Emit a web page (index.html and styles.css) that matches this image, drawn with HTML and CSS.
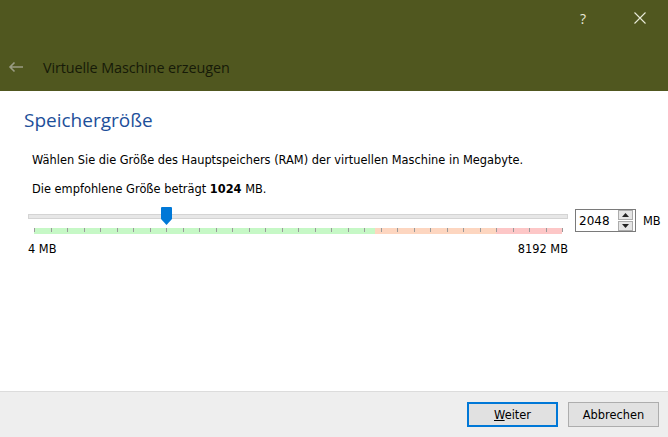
FILE: index.html
```html
<!DOCTYPE html>
<html lang="de">
<head>
<meta charset="utf-8">
<link rel="stylesheet" href="styles.css">
</head>
<body>
<div class="window">
  <header class="header">
    <div class="caption">
      <span class="cap-btn help">?</span>
      <span class="cap-btn close">
        <svg width="12" height="12" viewBox="0 0 12 12"><path d="M0.5 0.5 L11.5 11.5 M11.5 0.5 L0.5 11.5" stroke="#e8ead8" stroke-width="1.1" fill="none"/></svg>
      </span>
    </div>
    <div class="title-row">
      <svg class="back" width="16" height="12" viewBox="0 0 16 12"><path d="M15 6 H2 M6.5 1.5 L2 6 L6.5 10.5" stroke="#9a9c84" stroke-width="1.6" fill="none"/></svg>
      <span class="title">Virtuelle Maschine erzeugen</span>
    </div>
  </header>
  <main class="content">
    <h1 class="heading">Speichergröße</h1>
    <p class="text first">Wählen Sie die Größe des Hauptspeichers (RAM) der virtuellen Maschine in Megabyte.</p>
    <p class="text">Die empfohlene Größe beträgt <b>1024</b> MB.</p>
    <div class="slider-row">
      <div class="slider">
        <div class="track-area">
          <div class="track"></div>
          <svg class="thumb" width="11" height="18" viewBox="0 0 11 18"><path d="M0 1 Q0 0 1 0 H10 Q11 0 11 1 V12 L5.5 18 L0 12 Z" fill="#0078d7"/></svg>
        </div>
        <div class="scale">
          <div class="zone green"></div>
          <div class="zone orange"></div>
          <div class="zone red"></div>
          <div class="ticks">
            <i></i><i></i><i></i><i></i><i></i><i></i><i></i><i></i><i></i><i></i><i></i>
            <i></i><i></i><i></i><i></i><i></i><i></i><i></i><i></i><i></i><i></i><i></i>
            <i></i><i></i><i></i><i></i><i></i><i></i><i></i><i></i><i></i><i></i><i></i>
          </div>
        </div>
        <div class="scale-labels"><span>4 MB</span><span>8192 MB</span></div>
      </div>
      <div class="spinbox">
        <span class="spin-value">2048</span>
        <span class="spin-buttons">
          <span class="spin-btn"><svg width="7" height="4" viewBox="0 0 7 4"><path d="M0 4 L3.5 0 L7 4 Z" fill="#222"/></svg></span>
          <span class="spin-btn"><svg width="7" height="4" viewBox="0 0 7 4"><path d="M0 0 L3.5 4 L7 0 Z" fill="#222"/></svg></span>
        </span>
      </div>
      <span class="unit">MB</span>
    </div>
  </main>
  <footer class="footer">
    <button class="btn default"><u>W</u>eiter</button>
    <button class="btn">Abbrechen</button>
  </footer>
</div>
</body>
</html>
```
FILE: styles.css
```css
html, body {
  margin: 0;
  padding: 0;
}
body {
  width: 668px;
  height: 437px;
  overflow: hidden;
  background: #ffffff;
  font-family: "DejaVu Sans", Tahoma, sans-serif;
}
.window {
  display: flex;
  flex-direction: column;
  height: 437px;
}
.header {
  height: 91px;
  background: #50571f;
  display: flex;
  flex-direction: column;
}
.caption {
  height: 36px;
  display: flex;
  justify-content: flex-end;
  align-items: center;
}
.cap-btn {
  display: flex;
  justify-content: center;
  align-items: center;
  color: #e8ead8;
  font-family: "Open Sans", sans-serif;
  font-size: 14px;
}
.help {
  width: 12px;
  margin-right: 45px;
}
.close {
  width: 12px;
  margin-right: 22px;
}
.title-row {
  display: flex;
  align-items: center;
  height: 30px;
  margin-top: 16px;
}
.back {
  margin-left: 8px;
  margin-right: 19px;
}
.title {
  font-family: "Open Sans", sans-serif;
  font-size: 14.4px;
  color: #161a08;
  letter-spacing: -0.1px;
}
.content {
  flex: 1;
  padding: 0;
}
.heading {
  margin: 15px 0 0 24px;
  font-family: "Open Sans", sans-serif;
  font-weight: normal;
  font-size: 19px;
  color: #1d4f9a;
  line-height: 28px;
}
.text {
  margin: 0 0 0 32px;
  font-size: 11.4px;
  line-height: 14px;
  color: #000;
}
.text.first {
  margin-top: 19px;
  margin-bottom: 15px;
}
.text b {
  font-weight: bold;
}
.slider-row {
  display: flex;
  align-items: flex-start;
  margin: 11px 0 0 28px;
}
.slider {
  width: 540px;
}
.track-area {
  position: relative;
  height: 20px;
}
.track {
  position: absolute;
  left: 0;
  right: 0;
  top: 7px;
  height: 3px;
  background: #e7e7e7;
  border: 1px solid #d4d4d4;
}
.thumb {
  position: absolute;
  left: 133px;
  top: 0;
}
.scale {
  position: relative;
  display: flex;
  margin: 1px 6px 0 6px;
  height: 6px;
}
.zone {
  height: 6px;
}
.green {
  width: 341px;
  background: #c6f8c6;
}
.orange {
  width: 121px;
  background: #fdd6c0;
}
.red {
  flex: 1;
  background: #fdc7c7;
}
.ticks {
  position: absolute;
  left: 0;
  top: 0;
  width: 529px;
  height: 4px;
  display: flex;
  justify-content: space-between;
}
.ticks i {
  display: block;
  width: 1px;
  height: 4px;
  background: #9a9a9a;
}
.scale-labels {
  display: flex;
  justify-content: space-between;
  margin-top: 8px;
  font-size: 11.4px;
  line-height: 14px;
  color: #000;
}
.spinbox {
  margin: 2px 0 0 7px;
  width: 59px;
  height: 21px;
  border: 1px solid #7a7a7a;
  display: flex;
  align-items: center;
  justify-content: space-between;
  background: #fff;
}
.spin-value {
  font-size: 12px;
  margin-left: 3px;
  color: #000;
}
.spin-buttons {
  display: flex;
  flex-direction: column;
  gap: 1px;
  margin-right: 2px;
}
.spin-btn {
  width: 13px;
  height: 8px;
  background: #e5e5e5;
  border: 1px solid #acacac;
  display: flex;
  align-items: center;
  justify-content: center;
}
.unit {
  margin: 7px 0 0 7px;
  font-size: 11.4px;
  line-height: 14px;
}
.footer {
  height: 45px;
  background: #eeeeee;
  border-top: 1px solid #dcdcdc;
  display: flex;
  justify-content: flex-end;
  align-items: flex-start;
  padding-right: 9px;
  gap: 10px;
}
.btn {
  margin-top: 10px;
  width: 91px;
  height: 25px;
  background: #e1e1e1;
  border: 1px solid #adadad;
  font-family: "DejaVu Sans", Tahoma, sans-serif;
  font-size: 11.4px;
  color: #000;
  padding: 0;
}
.btn.default {
  border: 2px solid #0078d7;
}
```
